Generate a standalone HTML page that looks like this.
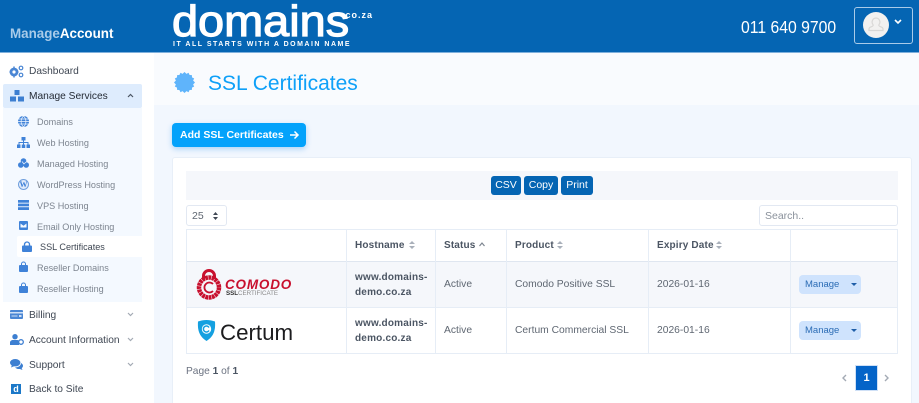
<!DOCTYPE html>
<html style="overflow:hidden"><head><meta charset="utf-8">
<style>
html,body{margin:0;padding:0}
body{width:919px;height:403px;overflow:hidden;background:#f2f7fe;font-family:"Liberation Sans",sans-serif;font-size:11px;color:#5b6472}
#w{position:relative;width:919px;height:403px;overflow:hidden;background:#f2f7fe}
.a{position:absolute;white-space:nowrap}
svg{position:absolute;overflow:visible}
.m{left:29px;font-size:10.2px;color:#3f4753;line-height:14px}
.s{left:37px;font-size:9.1px;color:#7d8590;line-height:14px}
.b{background:#0565b3;color:#fff;border-radius:3px;height:19px;line-height:19px;text-align:center;top:176px;font-size:10.5px}
.h{top:239px;font-weight:bold;color:#4b5563;font-size:10px;line-height:14px;letter-spacing:.15px}
.t{font-size:10.3px;line-height:14px;color:#5f6772}
.host{font-weight:bold;color:#4b5563;font-size:10px;line-height:15px;letter-spacing:.2px;left:355px}
.l{background:#e6edf6}
.mg{left:799px;width:62px;height:19px;background:#cfe3fd;border-radius:4px;color:#2b6cb5;font-size:9.5px;line-height:20px;text-indent:6px}
.mg i{position:absolute;left:52px;top:8px;border:3px solid transparent;border-top:3px solid #1f5ea8;border-bottom:0}
</style></head><body><div id="w">

<!-- header -->
<div class="a" style="left:0;top:0;width:919px;height:52px;background:#0565b3;border-bottom:1px solid #7fb0dc"></div>
<div class="a" style="left:10px;top:26px;font-size:13.4px;line-height:16px;font-weight:bold;color:#a9cbe9">Manage<span style="color:#fff">Account</span></div>
<div class="a" style="left:172px;top:-3px;font-size:44px;line-height:50px;color:#fff;-webkit-text-stroke:1.2px #fff;transform-origin:0 0;transform:scaleX(1.065)">domains</div>
<div class="a" style="left:342px;top:11px;font-size:9px;line-height:9px;color:#fff;font-weight:bold;letter-spacing:1px">.co.za</div>
<div class="a" style="left:173px;top:40px;font-size:7px;line-height:9px;color:#fff;font-weight:bold;letter-spacing:1.5px">IT ALL STARTS WITH A DOMAIN NAME</div>
<div class="a" style="left:741px;top:17px;font-size:17.5px;line-height:20px;color:#fff;transform-origin:0 0;transform:scaleX(.9)">011 640 9700</div>
<div class="a" style="left:854px;top:7px;width:57px;height:35px;border:1px solid #a9cbe9;border-radius:3px"></div>
<div class="a" style="left:863px;top:12px;width:26px;height:26px;border-radius:50%;background:#f2f1f0"></div>
<svg style="left:863px;top:12px" width="26" height="26" viewBox="0 0 26 26"><path d="M13 6a4 4 0 0 1 3 6.500c-.5 1 .2 1.800 1.500 2.200 1.600.5 2.500 1 2.500 2.300v1.500H6V17c0-1.300.9-1.800 2.500-2.300 1.300-.4 2-1.200 1.500-2.200A4 4 0 0 1 13 6z" fill="none" stroke="#d9d8d6" stroke-width="1.200"/></svg>
<svg style="left:894px;top:19px" width="8" height="6" viewBox="0 0 8 6"><path d="M1 1l3 3 3-3" fill="none" stroke="#fff" stroke-width="1.600"/></svg>

<!-- sidebar -->
<div class="a" style="left:0;top:53px;width:154px;height:350px;background:#fff"></div>
<div class="a" style="left:3px;top:84px;width:139px;height:24px;background:#deecfd;border-radius:2px"></div>
<div class="a" style="left:3px;top:108px;width:139px;height:194px;background:#f4f9ff"></div>
<div class="a" style="left:17px;top:236px;width:125px;height:21px;background:#fff;border-radius:2px 0 0 2px"></div>

<svg style="left:9px;top:65px" width="15" height="13" viewBox="0 0 15 13"><circle cx="5" cy="7" r="3" fill="none" stroke="#4a86d4" stroke-width="2.800"/><g stroke="#4a86d4" stroke-width="1.500"><path d="M5 1.500v2M5 10.500v2M.5 7h2M7.500 7h2M2 4l1.300 1.300M8 4L6.700 5.300M2 10l1.300-1.300M8 10L6.700 8.700"/></g><circle cx="12" cy="3" r="1.800" fill="none" stroke="#4a86d4" stroke-width="1.200"/><circle cx="12" cy="10" r="1.800" fill="none" stroke="#4a86d4" stroke-width="1.200"/></svg>
<div class="a m" style="top:65px">Dashboard</div>

<svg style="left:10px;top:90px" width="14" height="12" viewBox="0 0 14 12" fill="#3d7fd1"><rect x="4.500" y="0" width="5" height="5"/><rect x="0" y="6.500" width="6" height="5"/><rect x="8" y="6.500" width="6" height="5"/></svg>
<div class="a m" style="top:90px;color:#252b35">Manage Services</div>
<svg style="left:127px;top:93px" width="7" height="5" viewBox="0 0 7 5"><path d="M1 4l2.500-2.500L6 4" fill="none" stroke="#4b5563" stroke-width="1.200"/></svg>

<svg style="left:18px;top:116px" width="11" height="11" viewBox="0 0 11 11"><circle cx="5.500" cy="5.500" r="5.500" fill="#3f82d8"/><path d="M0 5.500h11M0 3h11M0 8h11M5.500 0c-3.200 3-3.200 8 0 11M5.500 0c3.200 3 3.200 8 0 11" fill="none" stroke="#f4f9ff" stroke-width=".7"/></svg>
<div class="a s" style="top:115px">Domains</div>

<svg style="left:17px;top:137px" width="13" height="11" viewBox="0 0 13 11" fill="#3f82d8"><rect x="4.500" y="0" width="4" height="3.500"/><rect x="0" y="7.500" width="3.500" height="3.500"/><rect x="4.750" y="7.500" width="3.500" height="3.500"/><rect x="9.500" y="7.500" width="3.500" height="3.500"/><path d="M6 3h1v2h4.500v3h-1V6H7v2H6V6H2.500v2h-1V5H6z"/></svg>
<div class="a s" style="top:136px">Web Hosting</div>

<svg style="left:18px;top:158px" width="11" height="10" viewBox="0 0 11 10" fill="#3f82d8"><circle cx="5.500" cy="3" r="2.800"/><circle cx="2.800" cy="7" r="2.800"/><circle cx="8.200" cy="7" r="2.800"/><path d="M4 3.500L6 6l2-2" stroke="#f4f9ff" stroke-width=".7" fill="none"/></svg>
<div class="a s" style="top:157px">Managed Hosting</div>

<div class="a" style="left:18px;top:179px;width:9px;height:9px;border:1px solid #6f9fdd;border-radius:50%;background:#dfeafa;color:#3f82d8;font:bold 8px/9px 'Liberation Serif',serif;text-align:center">W</div>
<div class="a s" style="top:178px">WordPress Hosting</div>

<svg style="left:18px;top:200px" width="11" height="10" viewBox="0 0 11 10" fill="#3f82d8"><rect width="11" height="2.700"/><rect y="3.600" width="11" height="2.700"/><rect y="7.200" width="11" height="2.800"/></svg>
<div class="a s" style="top:199px">VPS Hosting</div>

<svg style="left:19px;top:221px" width="9" height="9" viewBox="0 0 9 9"><rect width="9" height="9" rx="1" fill="#3f82d8"/><path d="M1.500 2.500l3 2.300 3-2.300v4h-6z" fill="#f4f9ff"/></svg>
<div class="a s" style="top:220px">Email Only Hosting</div>

<svg style="left:22px;top:241px" width="10" height="11" viewBox="0 0 10 11"><path d="M2.500 5V3.500a2.500 2.500 0 0 1 5 0V5" fill="none" stroke="#3f82d8" stroke-width="1.300"/><rect y="4.500" width="10" height="6.500" rx="1" fill="#3f82d8"/></svg>
<div class="a s" style="left:40px;top:240px;color:#3f4753">SSL Certificates</div>

<svg style="left:19px;top:262px" width="9" height="10" viewBox="0 0 9 10"><path d="M2.500 3V2a2 2 0 0 1 4 0v1" fill="none" stroke="#3f82d8"/><rect y="3" width="9" height="7" rx="1" fill="#3f82d8"/></svg>
<div class="a s" style="top:261px">Reseller Domains</div>

<svg style="left:19px;top:283px" width="9" height="10" viewBox="0 0 9 10"><path d="M2.500 3V2a2 2 0 0 1 4 0v1" fill="none" stroke="#3f82d8"/><rect y="3" width="9" height="7" rx="1" fill="#3f82d8"/></svg>
<div class="a s" style="top:282px">Reseller Hosting</div>

<svg style="left:10px;top:310px" width="13" height="9" viewBox="0 0 13 9"><rect width="13" height="9" rx="1" fill="#4a86d4"/><rect y="2" width="13" height="1.500" fill="#cfe0f6"/><rect x="1.500" y="5.500" width="6" height="1" fill="#cfe0f6"/><rect x="9" y="5" width="2.500" height="2" fill="#cfe0f6"/></svg>
<div class="a m" style="top:309px">Billing</div>
<svg style="left:127px;top:312px" width="7" height="5" viewBox="0 0 7 5"><path d="M1 1l2.500 2.500L6 1" fill="none" stroke="#a3aab4" stroke-width="1.200"/></svg>

<svg style="left:10px;top:334px" width="14" height="11" viewBox="0 0 14 11" fill="#3d7fd1"><circle cx="5" cy="2.700" r="2.700"/><path d="M0 11V8.500C0 7 1.500 6 3 6h4c.8 0 1.500.3 2 .8V11z"/><circle cx="11" cy="8" r="2.300" fill="none" stroke="#3d7fd1" stroke-width="1.300"/></svg>
<div class="a m" style="top:334px">Account Information</div>
<svg style="left:127px;top:337px" width="7" height="5" viewBox="0 0 7 5"><path d="M1 1l2.500 2.500L6 1" fill="none" stroke="#a3aab4" stroke-width="1.200"/></svg>

<svg style="left:10px;top:359px" width="13" height="11" viewBox="0 0 13 11" fill="#3d7fd1"><ellipse cx="5.200" cy="3.700" rx="5.200" ry="3.700"/><path d="M2 6l-1 2.500L4.500 7z"/><path d="M11 4c1.300.7 2 1.700 2 2.800 0 1-.5 1.800-1.300 2.400L12.500 11 9.800 10c-2 .2-3.600-.3-4.800-1.500 3.300 0 6-1.800 6-4.500z"/></svg>
<div class="a m" style="top:359px">Support</div>
<svg style="left:127px;top:362px" width="7" height="5" viewBox="0 0 7 5"><path d="M1 1l2.500 2.500L6 1" fill="none" stroke="#a3aab4" stroke-width="1.200"/></svg>

<div class="a" style="left:11px;top:384px;width:10px;height:10px;background:#1b78c8;color:#fff;font-size:9px;font-weight:bold;line-height:10px;text-align:center">d</div>
<div class="a m" style="top:383px">Back to Site</div>

<!-- page title -->
<div class="a" style="left:154px;top:53px;width:765px;height:52px;background:#f9fbfe"></div>
<svg style="left:174px;top:72px" width="21" height="21" viewBox="-10.500 -10.500 21 21"><polygon fill="#5fb4fb" points="0,-10.500 2,-8.600 4,-9.700 5.100,-7.500 7.400,-7.400 7.500,-5.100 9.700,-4 8.600,-2 10.500,0 8.600,2 9.700,4 7.500,5.100 7.400,7.400 5.100,7.500 4,9.700 2,8.600 0,10.500 -2,8.600 -4,9.700 -5.100,7.500 -7.400,7.400 -7.500,5.100 -9.700,4 -8.600,2 -10.500,0 -8.600,-2 -9.700,-4 -7.500,-5.100 -7.400,-7.400 -5.100,-7.500 -4,-9.700 -2,-8.600"/></svg>
<div class="a" style="left:208px;top:71px;font-size:21px;line-height:26px;color:#0ea0f8">SSL Certificates</div>

<!-- add button -->
<div class="a" style="left:172px;top:123px;width:134px;height:24px;background:#03a2fb;border-radius:4px;box-shadow:0 2px 6px rgba(3,130,230,.3);color:#fff;font-weight:bold;font-size:10.500px;line-height:25px;text-indent:8px">Add SSL Certificates</div>
<svg style="left:289px;top:130px" width="11" height="10" viewBox="0 0 11 10"><path d="M1 5h8M5.500 1.500L9 5 5.500 8.500" fill="none" stroke="#fff" stroke-width="1.500"/></svg>

<!-- card -->
<div class="a" style="left:172px;top:157px;width:738px;height:260px;background:#fff;border:1px solid #e8eff8;border-radius:3px"></div>
<div class="a" style="left:186px;top:171px;width:712px;height:29px;background:#f5f7fb"></div>
<div class="a b" style="left:491px;width:30px">CSV</div>
<div class="a b" style="left:524px;width:34px">Copy</div>
<div class="a b" style="left:561px;width:32px">Print</div>

<div class="a" style="left:186px;top:205px;width:39px;height:19px;border:1px solid #e2e8f2;border-radius:3px;background:#fff;line-height:20px;text-indent:5px;color:#5f6772;font-size:10.500px">25</div>
<svg style="left:213px;top:212px" width="5" height="8" viewBox="0 0 5 8" fill="#3f4753"><path d="M0 3l2.500-3L5 3zM0 5l2.500 3L5 5z"/></svg>
<div class="a" style="left:759px;top:205px;width:137px;height:19px;border:1px solid #e2e8f2;border-radius:3px;background:#fff;line-height:20px;text-indent:5px;color:#8a919b;font-size:10.500px">Search..</div>

<!-- table -->
<div class="a" style="left:187px;top:262px;width:711px;height:45px;background:#f5f7fb"></div>
<div class="a l" style="left:186px;top:229px;width:712px;height:1px"></div>
<div class="a l" style="left:186px;top:261px;width:712px;height:1px;background:#dfe6f0"></div>
<div class="a l" style="left:186px;top:307px;width:712px;height:1px"></div>
<div class="a l" style="left:186px;top:353px;width:712px;height:1px"></div>
<div class="a l" style="left:186px;top:229px;width:1px;height:125px"></div>
<div class="a l" style="left:346px;top:229px;width:1px;height:125px"></div>
<div class="a l" style="left:435px;top:229px;width:1px;height:125px"></div>
<div class="a l" style="left:506px;top:229px;width:1px;height:125px"></div>
<div class="a l" style="left:648px;top:229px;width:1px;height:125px"></div>
<div class="a l" style="left:790px;top:229px;width:1px;height:125px"></div>
<div class="a l" style="left:897px;top:229px;width:1px;height:125px"></div>

<div class="a h" style="left:355px">Hostname</div>
<svg style="left:409px;top:241px" width="6" height="8" viewBox="0 0 6 8" fill="#a9b0ba"><path d="M0 3l3-3 3 3zM0 5l3 3 3-3z"/></svg>
<div class="a h" style="left:444px">Status</div>
<svg style="left:479px;top:242px" width="6" height="4" viewBox="0 0 6 4"><path d="M.5 4L3 1l2.500 3" fill="none" stroke="#7d8590" stroke-width="1.200"/></svg>
<div class="a h" style="left:515px">Product</div>
<svg style="left:557px;top:241px" width="6" height="8" viewBox="0 0 6 8" fill="#a9b0ba"><path d="M0 3l3-3 3 3zM0 5l3 3 3-3z"/></svg>
<div class="a h" style="left:657px">Expiry Date</div>
<svg style="left:716px;top:241px" width="6" height="8" viewBox="0 0 6 8" fill="#a9b0ba"><path d="M0 3l3-3 3 3zM0 5l3 3 3-3z"/></svg>

<!-- row 1 -->
<svg style="left:197px;top:269px" width="24" height="31" viewBox="0 0 24 31"><path d="M6.500 10V7a5.500 5.500 0 0 1 11 0v3" fill="none" stroke="#c8102e" stroke-width="3"/><circle cx="12" cy="18.500" r="10" fill="none" stroke="#c8102e" stroke-width="4.500" stroke-dasharray="2.800 .5"/><path d="M16 15a5 5 0 1 0 0 7" fill="none" stroke="#c8102e" stroke-width="1.800"/></svg>
<div class="a" style="left:225px;top:277px;font-size:13.500px;line-height:15px;font-weight:bold;font-style:italic;color:#c8102e;letter-spacing:.8px">COMODO</div>
<div class="a" style="left:226px;top:290px;font-size:6.200px;line-height:7px;color:#8a8a8a"><b style="color:#333">SSL</b>CERTIFICATE</div>
<div class="a host" style="top:270px">www.domains-<br>demo.co.za</div>
<div class="a t" style="left:444px;top:278px">Active</div>
<div class="a t" style="left:515px;top:278px">Comodo Positive SSL</div>
<div class="a t" style="left:657px;top:278px">2026-01-16</div>
<div class="a mg" style="top:275px">Manage<i></i></div>

<!-- row 2 -->
<svg style="left:197px;top:320px" width="19" height="21" viewBox="0 0 19 21"><path d="M1 1.500C4 .5 6.500 0 9.500 0s5.500.5 8.500 1.500c.5 7.500-.5 14.500-8.500 19.500C1.500 16 .5 9 1 1.500z" fill="#14a0e0"/><circle cx="9.500" cy="9" r="4.700" fill="#fff"/><path d="M12 7.500a3 3 0 1 0 0 3" fill="none" stroke="#14a0e0" stroke-width="1.500"/></svg>
<div class="a" style="left:220px;top:319px;font-size:22.300px;line-height:28px;color:#1c1c1e">Certum</div>
<div class="a host" style="top:316px">www.domains-<br>demo.co.za</div>
<div class="a t" style="left:444px;top:324px">Active</div>
<div class="a t" style="left:515px;top:324px">Certum Commercial SSL</div>
<div class="a t" style="left:657px;top:324px">2026-01-16</div>
<div class="a mg" style="top:321px">Manage<i></i></div>

<!-- footer -->
<div class="a" style="left:186px;top:365px;font-size:10.200px;line-height:14px;color:#6b7280">Page <b style="color:#4b5563">1</b> of <b style="color:#4b5563">1</b></div>
<svg style="left:842px;top:374px" width="5" height="8" viewBox="0 0 5 8"><path d="M4 1L1 4l3 3" fill="none" stroke="#a3aab4" stroke-width="1.400"/></svg>
<div class="a" style="left:855px;top:365px;width:21px;height:24px;background:#0464c8;border:1px solid #cfe0f6;color:#fff;font-weight:bold;font-size:11px;line-height:24px;text-align:center">1</div>
<svg style="left:884px;top:374px" width="5" height="8" viewBox="0 0 5 8"><path d="M1 1l3 3-3 3" fill="none" stroke="#a3aab4" stroke-width="1.400"/></svg>

</div></body></html>
